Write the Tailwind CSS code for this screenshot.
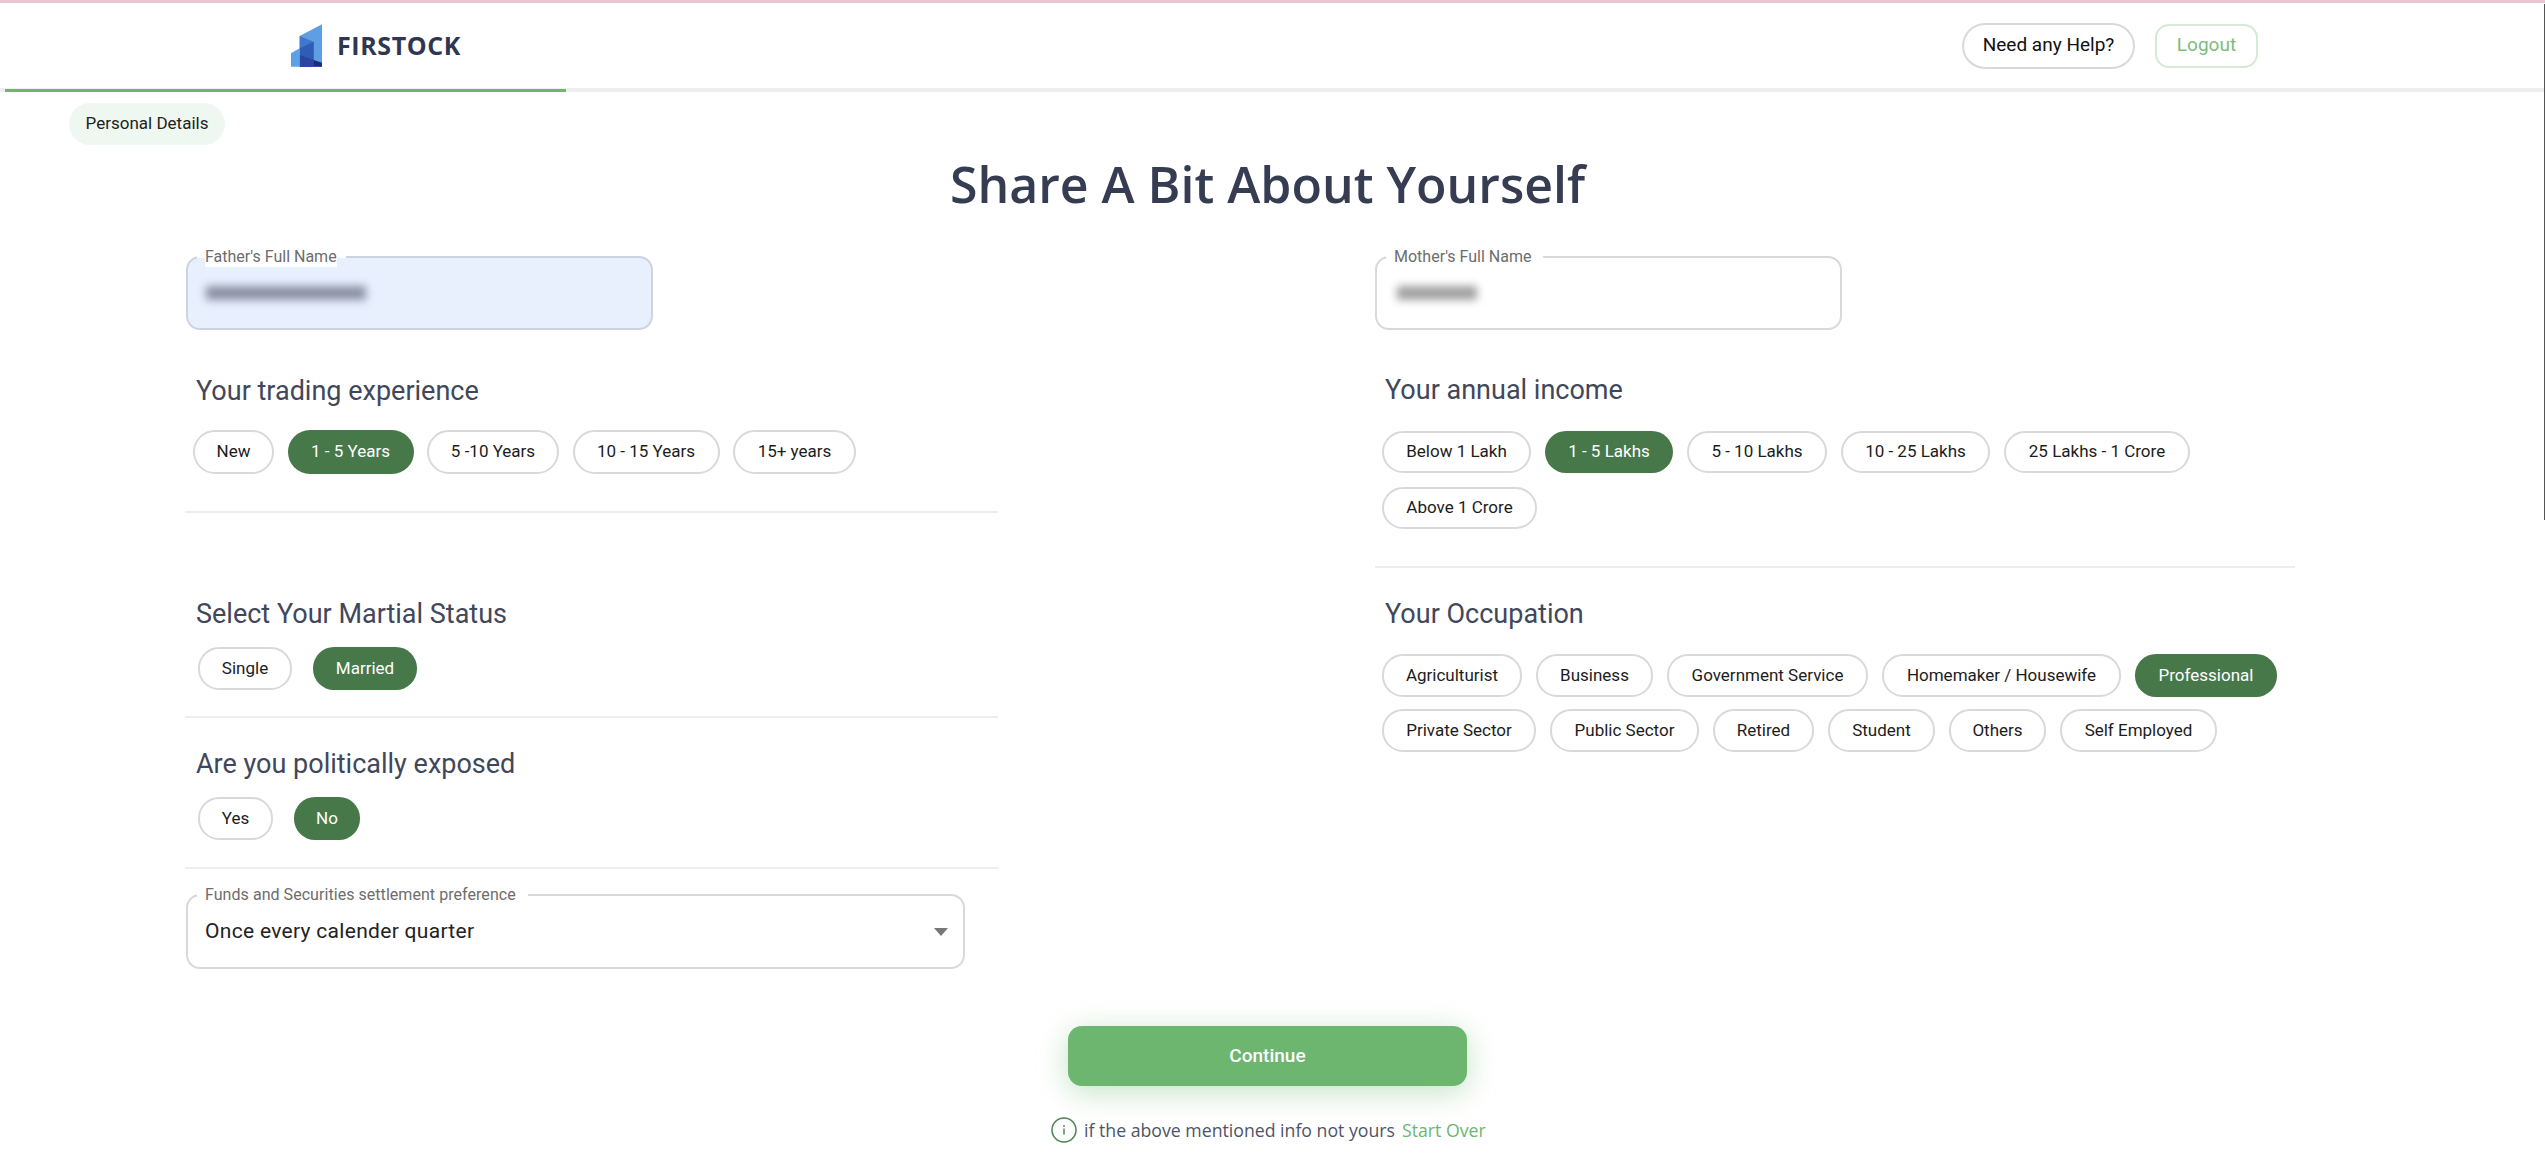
<!DOCTYPE html>
<html lang="en">
<head>
<meta charset="utf-8">
<title>Firstock</title>
<script src="https://cdn.jsdelivr.net/npm/@tailwindcss/browser@4"></script>
</head>
<body class="relative h-[1175px] overflow-hidden bg-white font-['Roboto',sans-serif] text-[#1c1c1c]">
<div class="absolute right-0 top-[4px] h-[516px] w-px bg-[#555]"></div>
<div class="h-[3px] bg-[#e6c4d1]"></div>
<header class="flex h-[85px] items-center justify-between pl-[291px] pr-[287px]">
  <div class="flex items-center gap-[15px]">
    <svg width="31" height="43" viewBox="62 33 93 127"><polygon points="88,68 155,33 155,160 88,160" fill="#5e9fe3"/><polygon points="88,68 130,85 130,160 88,160" fill="#3f78cc"/><polygon points="88,105 130,85 130,160 88,160" fill="#2f5db5"/><polygon points="88,125 130,140 130,160 88,160" fill="#2a459f"/><polygon points="130,140 155,148 155,160 130,160" fill="#1c2c78"/><polygon points="62,120 88,105 88,160 62,160" fill="#5ba3e6"/></svg>
    <span class="font-['Open_Sans',sans-serif] text-[25px] font-bold leading-none tracking-[0.6px] text-[#2f3650]">FIRSTOCK</span>
  </div>
  <div class="flex items-center gap-[20px]">
    <button class="h-[46px] w-[173px] rounded-[23px] border-2 border-[#d9d9d9] text-[19px] text-[#111]">Need any Help?</button>
    <button class="h-[44px] w-[103px] rounded-[14px] border-2 border-[#d3ead4] text-[19px] text-[#7dbb80]">Logout</button>
  </div>
</header>
<div class="flex h-[4px] items-end bg-[#eeeeee] pl-[5px]"><div class="h-[3px] w-[561px] bg-[#6cb670]"></div></div>

<div class="ml-[69px] mt-[11px] flex h-[42px] w-[156px] items-center justify-center rounded-[21px] bg-[#eef8f0] text-[17px] text-[#222]">Personal Details</div>
<h1 class="mt-[9px] h-[60px] pr-[10px] text-center font-['Open_Sans',sans-serif] text-[50px] font-semibold leading-[60px] text-[#363c52]">Share A Bit About Yourself</h1>

<main class="ml-[185px] mt-[42px] grid grid-cols-[813px_920px] gap-x-[377px]">
  <section>
    <div class="relative ml-px h-[74px] w-[467px] rounded-[14px] border-2 border-[#ced3e2] bg-[#e8f0fe]">
      <div class="absolute left-[9px] top-[-2px] h-[2px] w-[149px] bg-white"></div>
      <span class="absolute left-[17px] top-[-11px] bg-white text-[16px] leading-[20px] text-[#6d6d6d]">Father's Full Name</span>
      <div class="absolute left-[18px] top-[28px] h-[14px] w-[160px] bg-[#8a90a2] blur-[4px]"></div>
    </div>
    <h2 class="mt-[45px] pl-[11px] text-[27px] leading-[32px] text-[#41475a]">Your trading experience</h2>
    <div class="mt-[23px] flex gap-[13.5px] pl-[8px]">
      <span class="flex h-[44px] w-[81px] items-center justify-center rounded-[22px] border-2 border-[#d9d9d9] text-[17px]">New</span>
      <span class="flex h-[44px] w-[126px] items-center justify-center rounded-[22px] bg-[#47784a] text-[17px] text-white">1 - 5 Years</span>
      <span class="flex h-[44px] w-[132px] items-center justify-center rounded-[22px] border-2 border-[#d9d9d9] text-[17px]">5 -10 Years</span>
      <span class="flex h-[44px] w-[147px] items-center justify-center rounded-[22px] border-2 border-[#d9d9d9] text-[17px]">10 - 15 Years</span>
      <span class="flex h-[44px] w-[123px] items-center justify-center rounded-[22px] border-2 border-[#d9d9d9] text-[17px]">15+ years</span>
    </div>
    <div class="mt-[37px] h-[2px] bg-[#eeeeee]"></div>
    <h2 class="mt-[85px] pl-[11px] text-[27px] leading-[32px] text-[#41475a]">Select Your Martial Status</h2>
    <div class="mt-[17px] flex gap-[21px] pl-[13px]">
      <span class="flex h-[43px] w-[94px] items-center justify-center rounded-[21px] border-2 border-[#d9d9d9] text-[17px]">Single</span>
      <span class="flex h-[43px] w-[104px] items-center justify-center rounded-[21px] bg-[#47784a] text-[17px] text-white">Married</span>
    </div>
    <div class="mt-[26px] h-[2px] bg-[#eeeeee]"></div>
    <h2 class="mt-[30px] pl-[11px] text-[27px] leading-[32px] text-[#41475a]">Are you politically exposed</h2>
    <div class="mt-[17px] flex gap-[21px] pl-[13px]">
      <span class="flex h-[43px] w-[75px] items-center justify-center rounded-[21px] border-2 border-[#d9d9d9] text-[17px]">Yes</span>
      <span class="flex h-[43px] w-[66px] items-center justify-center rounded-[21px] bg-[#47784a] text-[17px] text-white">No</span>
    </div>
    <div class="mt-[27px] h-[2px] bg-[#eeeeee]"></div>
    <div class="relative ml-px mt-[25px] flex h-[75px] w-[779px] items-center justify-between rounded-[14px] border-2 border-[#d9d9d9] pl-[17px] pr-[15px]">
      <div class="absolute left-[9px] top-[-2px] h-[2px] w-[331px] bg-white"></div>
      <span class="absolute left-[17px] top-[-11px] bg-white text-[16px] leading-[20px] tracking-[0.05px] text-[#6d6d6d]">Funds and Securities settlement preference</span>
      <span class="text-[21px] tracking-[0.3px] text-[#222]">Once every calender quarter</span>
      <svg width="14" height="8" viewBox="0 0 14 8"><polygon points="0,0 14,0 7,8" fill="#777777"/></svg>
    </div>
  </section>
  <section>
    <div class="relative h-[74px] w-[467px] rounded-[14px] border-2 border-[#d9d9dd] bg-white">
      <div class="absolute left-[9px] top-[-2px] h-[2px] w-[157px] bg-white"></div>
      <span class="absolute left-[17px] top-[-11px] bg-white text-[16px] leading-[20px] text-[#6d6d6d]">Mother's Full Name</span>
      <div class="absolute left-[20px] top-[28px] h-[14px] w-[80px] bg-[#a0a0a0] blur-[4px]"></div>
    </div>
    <h2 class="mt-[44px] pl-[10px] text-[27px] leading-[32px] text-[#41475a]">Your annual income</h2>
    <div class="mt-[25px] flex flex-wrap gap-x-[14px] gap-y-[14px] pl-[7px]">
      <span class="flex h-[42px] w-[149px] items-center justify-center rounded-[21px] border-2 border-[#d9d9d9] text-[17px]">Below 1 Lakh</span>
      <span class="flex h-[42px] w-[128px] items-center justify-center rounded-[21px] bg-[#47784a] text-[17px] text-white">1 - 5 Lakhs</span>
      <span class="flex h-[42px] w-[140px] items-center justify-center rounded-[21px] border-2 border-[#d9d9d9] text-[17px]">5 - 10 Lakhs</span>
      <span class="flex h-[42px] w-[149px] items-center justify-center rounded-[21px] border-2 border-[#d9d9d9] text-[17px]">10 - 25 Lakhs</span>
      <span class="flex h-[42px] w-[186px] items-center justify-center rounded-[21px] border-2 border-[#d9d9d9] text-[17px]">25 Lakhs - 1 Crore</span>
      <span class="flex h-[42px] w-[155px] items-center justify-center rounded-[21px] border-2 border-[#d9d9d9] text-[17px]">Above 1 Crore</span>
    </div>
    <div class="mt-[37px] h-[2px] bg-[#eeeeee]"></div>
    <h2 class="mt-[30px] pl-[10px] text-[27px] leading-[32px] text-[#41475a]">Your Occupation</h2>
    <div class="mt-[24px] flex flex-wrap gap-x-[14px] gap-y-[12px] pl-[7px]">
      <span class="flex h-[43px] w-[140px] items-center justify-center rounded-[21px] border-2 border-[#d9d9d9] text-[17px]">Agriculturist</span>
      <span class="flex h-[43px] w-[117px] items-center justify-center rounded-[21px] border-2 border-[#d9d9d9] text-[17px]">Business</span>
      <span class="flex h-[43px] w-[201px] items-center justify-center rounded-[21px] border-2 border-[#d9d9d9] text-[17px]">Government Service</span>
      <span class="flex h-[43px] w-[239px] items-center justify-center rounded-[21px] border-2 border-[#d9d9d9] text-[17px]">Homemaker / Housewife</span>
      <span class="flex h-[43px] w-[142px] items-center justify-center rounded-[21px] bg-[#47784a] text-[17px] text-white">Professional</span>
      <span class="flex h-[43px] w-[154px] items-center justify-center rounded-[21px] border-2 border-[#d9d9d9] text-[17px]">Private Sector</span>
      <span class="flex h-[43px] w-[149px] items-center justify-center rounded-[21px] border-2 border-[#d9d9d9] text-[17px]">Public Sector</span>
      <span class="flex h-[43px] w-[101px] items-center justify-center rounded-[21px] border-2 border-[#d9d9d9] text-[17px]">Retired</span>
      <span class="flex h-[43px] w-[107px] items-center justify-center rounded-[21px] border-2 border-[#d9d9d9] text-[17px]">Student</span>
      <span class="flex h-[43px] w-[97px] items-center justify-center rounded-[21px] border-2 border-[#d9d9d9] text-[17px]">Others</span>
      <span class="flex h-[43px] w-[157px] items-center justify-center rounded-[21px] border-2 border-[#d9d9d9] text-[17px]">Self Employed</span>
    </div>
  </section>
</main>

<button class="ml-[1068px] mt-[57px] block h-[60px] w-[399px] rounded-[14px] bg-[#6cb670] text-[19px] font-medium text-white shadow-[0_6px_30px_rgba(108,182,112,0.4)]">Continue</button>
<div class="ml-[1051px] mt-[31px] flex h-[26px] items-center whitespace-nowrap font-['Open_Sans',sans-serif] text-[17.7px] text-[#4e5468]">
  <svg class="mr-[7px]" width="26" height="26" viewBox="0 0 26 26"><circle cx="13" cy="13" r="12" fill="#fbfefb" stroke="#4f8055" stroke-width="1.5"/><circle cx="13" cy="9" r="0.9" fill="#4f8055"/><rect x="12.3" y="11.5" width="1.4" height="6" fill="#4f8055"/></svg>
  <span>if the above mentioned info not yours</span><span class="ml-[7px] text-[#6cb670]">Start Over</span>
</div>
</body>
</html>
